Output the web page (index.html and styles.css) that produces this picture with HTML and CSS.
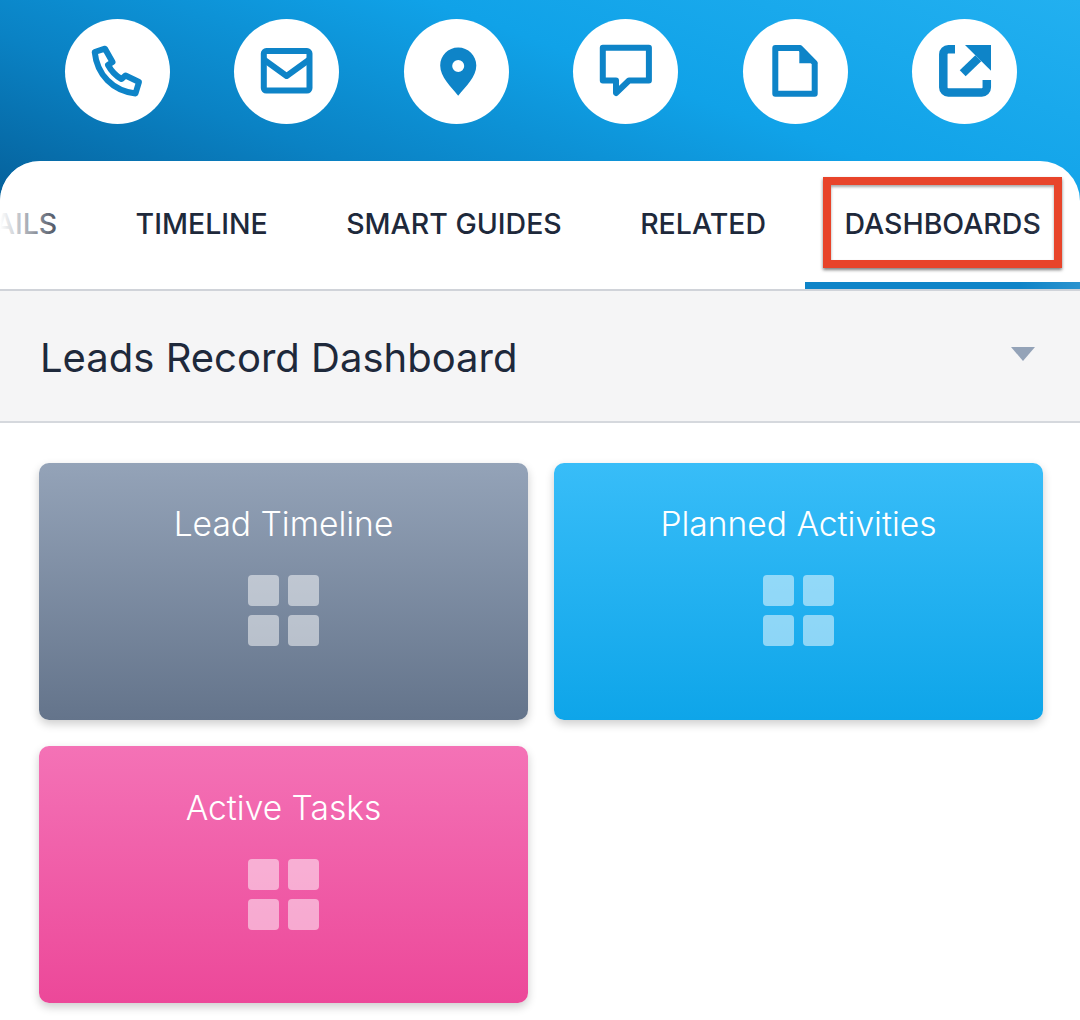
FILE: index.html
```html
<!DOCTYPE html>
<html>
<head>
  <title>Leads Record Dashboard</title>
  <link rel="stylesheet" href="styles.css">
</head>
<body>
  <div class="top-bar">
    <a class="action">
      <svg viewBox="0 0 105 105"><path class="line" d="M29.7 33 L40 29.7 L47.5 43 L43 46 C46 51.5 51 57 56.5 60 L60.5 56.5 L74 63 L70.5 74.5 C48 72 32 56 29.7 33 Z"/></svg>
    </a>
    <a class="action">
      <svg viewBox="0 0 105 105"><rect class="line" x="29.8" y="32.1" width="45.7" height="39.4" rx="2.5"/><path class="line" d="M29.8 40.5 L52.6 57 L75.4 40.5"/></svg>
    </a>
    <a class="action">
      <svg viewBox="0 0 105 105"><path class="solid" fill-rule="evenodd" d="M54.2 76.8 C47 68 36.2 58 36.2 46.6 C36.2 36.6 44.2 28.6 54.2 28.6 C64.2 28.6 72.3 36.6 72.3 46.6 C72.3 58 61.5 68 54.2 76.8 Z M54.2 41 a6 6 0 1 0 0 12 a6 6 0 1 0 0 -12 Z"/></svg>
    </a>
    <a class="action">
      <svg viewBox="0 0 105 105"><path class="line" d="M29.8 28.8 H75.9 V61.5 H56 L43 74 V61.5 H29.8 Z"/></svg>
    </a>
    <a class="action">
      <svg viewBox="0 0 105 105"><path class="line" d="M32.3 29 H57 L71.7 44 V74.7 H32.3 Z"/><path class="solid" d="M56.3 26 L74.7 44.3 H56.3 Z"/></svg>
    </a>
    <a class="action">
      <svg viewBox="0 0 105 105"><path class="line heavy" d="M43 30.2 H36.3 a5 5 0 0 0 -5 5 V68.5 a5 5 0 0 0 5 5 H69.8 a5 5 0 0 0 5 -5 V61"/><path class="solid" d="M53 26 H79 V51.7 Z"/><path class="line heavy" d="M66.3 39.3 L50.7 54.3"/></svg>
    </a>
  </div>

  <div class="panel">
    <div class="tabs">
      <a class="tab">DETAILS</a>
      <a class="tab">TIMELINE</a>
      <a class="tab">SMART GUIDES</a>
      <a class="tab">RELATED</a>
      <a class="tab tab-active">DASHBOARDS</a>
      <div class="tabs-fade"></div>
      <div class="callout"></div>
    </div>

    <div class="picker">
      <h1 class="picker-title">Leads Record Dashboard</h1>
      <span class="picker-caret"></span>
    </div>

    <div class="cards">
      <div class="card card-grey">
        <div class="card-title">Lead Timeline</div>
        <div class="card-icon"><span></span><span></span><span></span><span></span></div>
      </div>
      <div class="card card-blue">
        <div class="card-title">Planned Activities</div>
        <div class="card-icon"><span></span><span></span><span></span><span></span></div>
      </div>
      <div class="card card-pink">
        <div class="card-title">Active Tasks</div>
        <div class="card-icon"><span></span><span></span><span></span><span></span></div>
      </div>
    </div>
  </div>
</body>
</html>
```

FILE: styles.css
```css
body {
  margin: 0;
  background-color: #fff;
  font-family: Inter, "Liberation Sans", sans-serif;
  color: #1e293b;
}

/*blue strip with the round action buttons*/
.top-bar {
  height: 201px;
  margin-bottom: -40px;
  box-sizing: border-box;
  padding: 19px 30.6px 0 32.7px;
  display: flex;
  justify-content: space-around;
  align-items: flex-start;
  background: linear-gradient(200deg, #22b0f0 0%, #10a2e8 40%, #0a82c4 72%, #05609a 100%);
}

.action {
  width: 105px;
  height: 105px;
  border-radius: 50%;
  background-color: #fff;
  display: block;
}

.action svg {
  display: block;
  width: 105px;
  height: 105px;
}

.line {
  fill: none;
  stroke: #0e84c8;
  stroke-width: 6;
  stroke-linejoin: round;
}

.heavy {
  stroke-width: 8.5;
  stroke-linejoin: miter;
}

.solid {
  fill: #0e84c8;
}

.panel {
  position: relative;
  background-color: #fff;
  border-radius: 40px 40px 0 0;
  overflow: hidden;
}

/*tab strip is scrolled to its right end*/
.tabs {
  position: relative;
  height: 128px;
  display: flex;
  justify-content: flex-end;
  border-bottom: 2px solid #d0d3d9;
  overflow: hidden;
}

.tab {
  flex-shrink: 0;
  padding: 0 39.2px;
  font-size: 28.5px;
  font-weight: 500;
  line-height: 125px;
  box-sizing: border-box;
  height: 128px;
}

.tab-active {
  border-bottom: 7px solid #0e84c8;
}

.tabs-fade {
  position: absolute;
  top: 0;
  left: 0;
  right: 0;
  bottom: 0;
  background: linear-gradient(90deg, #fff 0, rgba(255,255,255,0) 72px, rgba(255,255,255,0) 1020px, rgba(255,255,255,0.12) 1080px);
}

/*red box the screenshot author drew around the tab*/
.callout {
  position: absolute;
  left: 823px;
  top: 16px;
  width: 239px;
  height: 91px;
  box-sizing: border-box;
  border: 8px solid #e8442a;
  box-shadow: 0 2px 3px rgba(0,0,0,0.5), inset 0 2px 3px rgba(0,0,0,0.35);
}

.picker {
  height: 130px;
  padding: 0 45px 0 40px;
  display: flex;
  justify-content: space-between;
  align-items: center;
  background-color: #f5f5f6;
  border-bottom: 2px solid #d5d8dd;
}

.picker-title {
  margin: 3px 0 0;
  font-size: 40px;
  font-weight: 400;
}

.picker-caret {
  width: 0;
  height: 0;
  margin-bottom: 5px;
  border-left: 12.5px solid transparent;
  border-right: 12.5px solid transparent;
  border-top: 14px solid #94a3b8;
}

.cards {
  padding: 40px 37px 17px 39px;
  display: grid;
  grid-template-columns: 489px 489px;
  grid-auto-rows: 257px;
  gap: 26px;
}

.card {
  border-radius: 10px;
  padding-top: 41px;
  box-sizing: border-box;
  display: flex;
  flex-direction: column;
  align-items: center;
  color: #fff;
  box-shadow: 0 4px 10px rgba(0,0,0,0.2);
}

.card-title {
  font-size: 33.6px;
  font-weight: 300;
  line-height: 40px;
}

.card-icon {
  margin-top: 31px;
  display: grid;
  grid-template-columns: 31px 31px;
  grid-auto-rows: 31px;
  gap: 9px;
}

.card-icon span {
  background-color: rgba(255,255,255,0.5);
  border-radius: 4px;
}

.card-grey {
  background: linear-gradient(180deg, #94a3b8, #64748b);
}

.card-blue {
  background: linear-gradient(180deg, #38bdf8, #0ea5e9);
}

.card-pink {
  padding-top: 42px;
  background: linear-gradient(180deg, #f472b6, #ec4899);
}
```
